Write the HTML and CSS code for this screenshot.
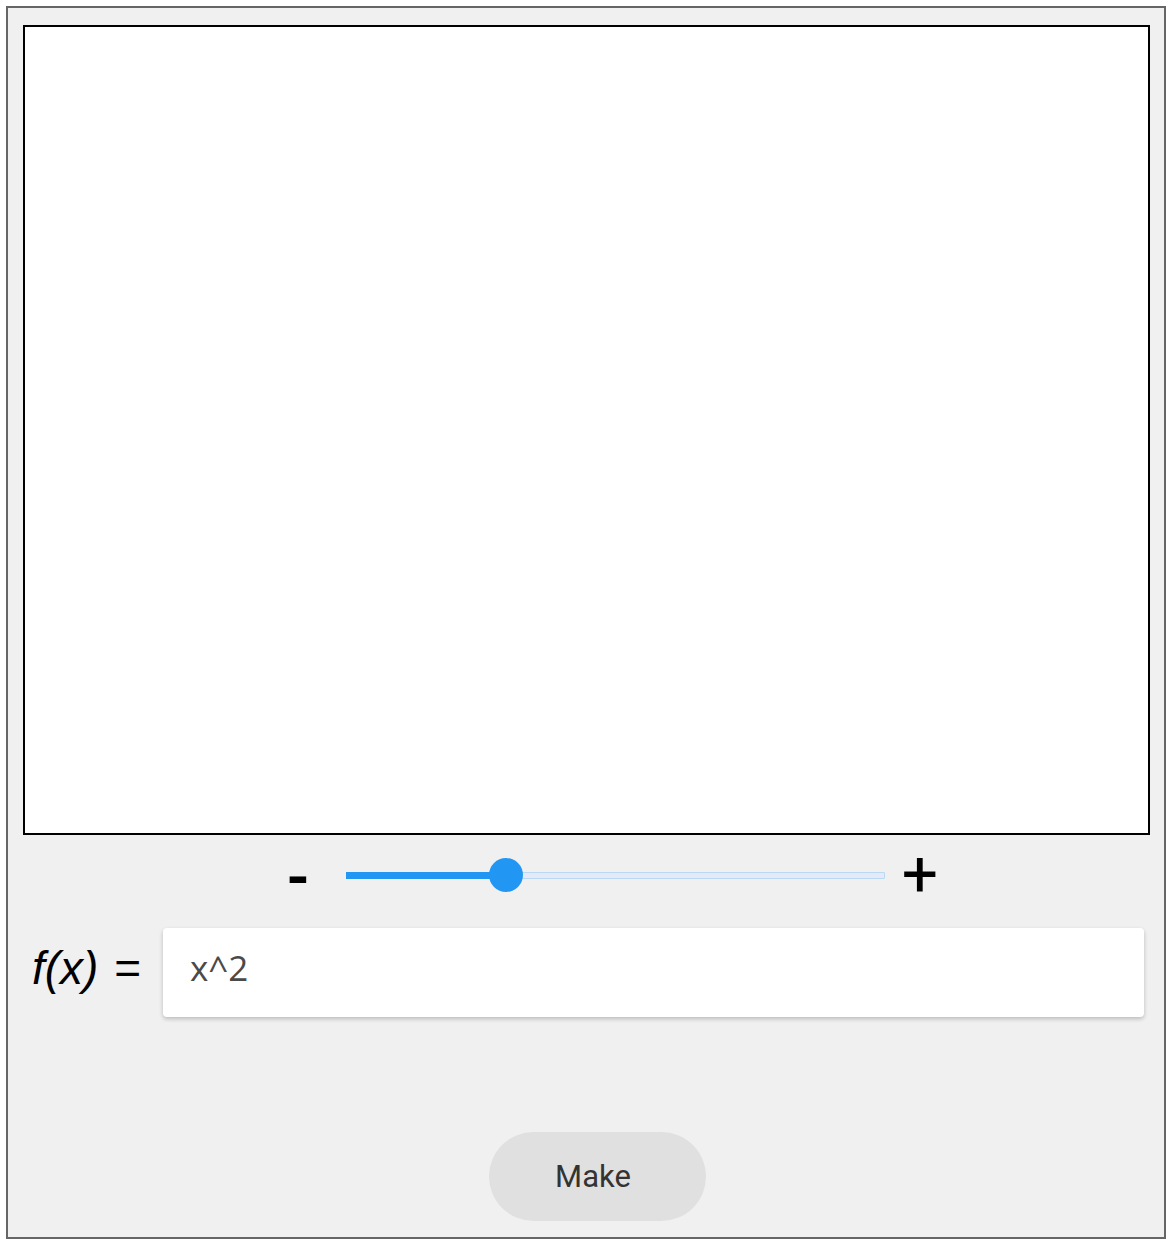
FILE: index.html
```html
<!DOCTYPE html>
<html lang="en">
<head>
<meta charset="utf-8">
<title>Function plotter</title>
<link rel="stylesheet" href="styles.css">
</head>
<body>
  <div class="frame">
    <div class="canvas"></div>
    <div class="zoom-row">
      <span class="zoom-btn minus">-</span>
      <div class="slider">
        <div class="slider-fill" style="width: 160px"></div>
        <div class="slider-thumb" style="left: 160px"></div>
      </div>
      <span class="zoom-btn plus">+</span>
    </div>
    <div class="formula-row">
      <label class="formula-label"><i>f(x)</i> <span class="eq">=</span></label>
      <div class="formula-input">x^2</div>
    </div>
    <div class="actions">
      <button class="make-btn">Make</button>
    </div>
  </div>
</body>
</html>
```

FILE: styles.css
```css
html, body {
  margin: 0;
  padding: 0;
  background: #ffffff;
}

body {
  padding: 6px;
  font-family: Roboto, "Liberation Sans", sans-serif;
}

.frame {
  box-sizing: border-box;
  width: 1160px;
  height: 1233px;
  border: 2px solid #666666;
  background: #f0f0f0;
  padding: 17px 14px 0 15px;
}

.canvas {
  box-sizing: border-box;
  width: 1127px;
  height: 810px;
  border: 2px solid #000000;
  background: #ffffff;
}

.zoom-row {
  display: flex;
  align-items: center;
  height: 80px;
  padding-left: 255px;
}

.zoom-btn {
  font-family: Roboto, "Liberation Sans", sans-serif;
  line-height: 60px;
  color: #000000;
  text-align: center;
}

.minus {
  width: 40px;
  margin-right: 28px;
  font-size: 60px;
  font-weight: 700;
  position: relative;
  top: 3px;
}

.plus {
  width: 50px;
  margin-left: 10px;
  font-size: 64px;
}

.slider {
  position: relative;
  box-sizing: border-box;
  width: 539px;
  height: 7px;
  background: #e6e9f7;
  border: 1px solid #b9d8f3;
  border-radius: 1px;
}

.slider-fill {
  position: absolute;
  left: -1px;
  top: -1px;
  height: 7px;
  background: #2196f3;
}

.slider-thumb {
  position: absolute;
  top: 50%;
  width: 34px;
  height: 34px;
  margin-left: -18px;
  margin-top: -17px;
  border-radius: 50%;
  background: #2196f3;
}

.formula-row {
  display: flex;
  align-items: center;
  margin-top: 13px;
}

.formula-label {
  box-sizing: border-box;
  width: 140px;
  padding-left: 9px;
  font-family: "Liberation Sans", Arial, sans-serif;
  font-size: 46px;
  line-height: 52px;
  color: #000000;
  white-space: nowrap;
  position: relative;
  top: -5px;
}

.formula-label i {
  font-style: italic;
}

.eq {
  margin-left: 3px;
}

.formula-input {
  box-sizing: border-box;
  width: 981px;
  height: 89px;
  padding-left: 27px;
  padding-bottom: 11px;
  display: flex;
  align-items: center;
  background: #ffffff;
  border-radius: 4px;
  box-shadow: 0 2px 4px rgba(0, 0, 0, 0.22);
  font-family: "Open Sans", "Noto Sans", sans-serif;
  font-size: 35px;
  color: #4a4a4a;
}

.actions {
  display: flex;
  margin-top: 115px;
  padding-left: 466px;
}

.make-btn {
  width: 217px;
  height: 89px;
  border: none;
  border-radius: 45px;
  background: #e0e0e0;
  color: #333333;
  font-family: Roboto, "Liberation Sans", sans-serif;
  font-size: 31px;
  padding: 0 9px 0 0;
}
```
